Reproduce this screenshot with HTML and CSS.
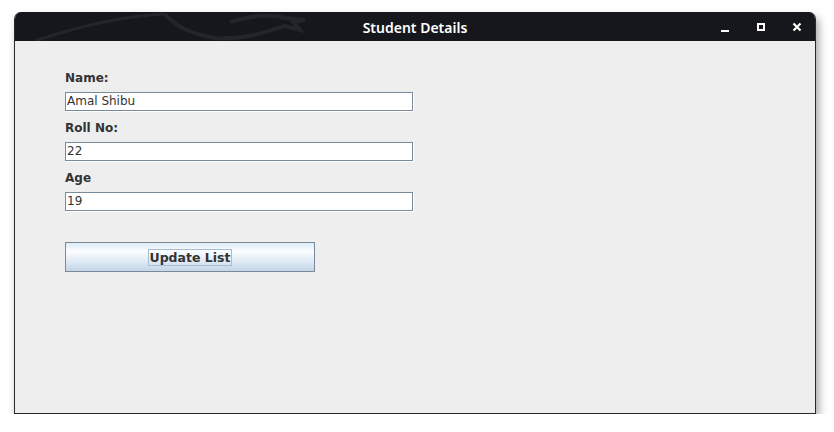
FILE: index.html
```html
<!DOCTYPE html>
<html>
<head>
<meta charset="utf-8">
<link rel="stylesheet" href="styles.css">
</head>
<body>
<div class="window">
  <div class="titlebar">
    <svg class="dragon" width="300" height="29" viewBox="0 0 300 29">
      <path d="M20 29 C70 12 110 4 150 2" stroke="#23252b" stroke-width="3" fill="none"/>
      <path d="M150 2 C160 14 175 22 200 26 C230 28 250 20 270 14 L285 18 L278 10 L290 8 L270 6 C255 2 235 4 215 10" stroke="#23252b" stroke-width="4" fill="none"/>
    </svg>
    <span class="title">Student Details</span>
    <div class="controls">
      <span class="ctl min"></span>
      <span class="ctl max"></span>
      <span class="ctl close">
        <svg width="10" height="10" viewBox="0 0 10 10"><path d="M1.5 1.5 L8.5 8.5 M8.5 1.5 L1.5 8.5" stroke="#fff" stroke-width="2.2" fill="none"/></svg>
      </span>
    </div>
  </div>
  <div class="content">
    <div class="field-row">
      <label class="lbl">Name:</label>
      <div class="input">Amal Shibu</div>
    </div>
    <div class="field-row">
      <label class="lbl">Roll No:</label>
      <div class="input">22</div>
    </div>
    <div class="field-row">
      <label class="lbl">Age</label>
      <div class="input">19</div>
    </div>
    <div class="btn"><span class="focus">Update List</span></div>
  </div>
</div>
</body>
</html>
```

FILE: styles.css
```css
html, body {
  margin: 0;
  padding: 0;
  background: #ffffff;
}
body {
  padding: 12px 0 0 14px;
  font-family: "DejaVu Sans", sans-serif;
}
.window {
  width: 800px;
  height: 401px;
  border: 1px solid #2a2a2a;
  border-top: none;
  border-radius: 7px 7px 0 0;
  background: #eeeeee;
  box-shadow: 3px 5px 8px rgba(0,0,0,0.35);
  display: flex;
  flex-direction: column;
  overflow: hidden;
}
.titlebar {
  height: 29px;
  background: #16171c;
  position: relative;
  display: flex;
  align-items: center;
  justify-content: center;
  flex: none;
}
.dragon {
  position: absolute;
  left: 0;
  top: 0;
}
.title {
  color: #ffffff;
  font-family: "Noto Sans", "Open Sans", sans-serif;
  font-size: 14px;
  font-weight: 600;
  position: relative;
  top: 1px;
}
.controls {
  position: absolute;
  right: 0;
  top: 0;
  height: 29px;
  display: flex;
  align-items: center;
}
.ctl {
  width: 36px;
  height: 29px;
  display: flex;
  justify-content: center;
  align-items: center;
}
.min::before {
  content: "";
  display: block;
  width: 8px;
  height: 2px;
  background: #fff;
  margin-top: 8px;
}
.max::before {
  content: "";
  display: block;
  width: 4px;
  height: 4px;
  border: 2px solid #fff;
}
.content {
  padding: 29px 0 0 50px;
  display: flex;
  flex-direction: column;
}
.field-row {
  display: flex;
  flex-direction: column;
  margin-bottom: 9px;
}
.lbl {
  font-size: 12px;
  font-weight: bold;
  color: #333333;
  height: 22px;
  line-height: 16px;
}
.input {
  width: 345px;
  height: 17px;
  border: 1px solid #7a8a99;
  box-shadow: 1px 1px 0 #ffffff;
  background: #ffffff;
  font-size: 12px;
  line-height: 17px;
  padding-left: 1px;
  color: #333333;
}
.btn {
  margin-top: 22px;
  width: 248px;
  height: 28px;
  border: 1px solid #7a8a99;
  background: linear-gradient(#ddebf7 0%, #fbfdff 30%, #e3edf6 60%, #c3d5e8 100%);
  display: flex;
  justify-content: center;
  align-items: center;
}
.focus {
  border: 1px solid #a8bdd2;
  font-size: 12.5px;
  font-weight: bold;
  color: #333333;
  line-height: 15px;
  padding: 0 1px;
}
```
